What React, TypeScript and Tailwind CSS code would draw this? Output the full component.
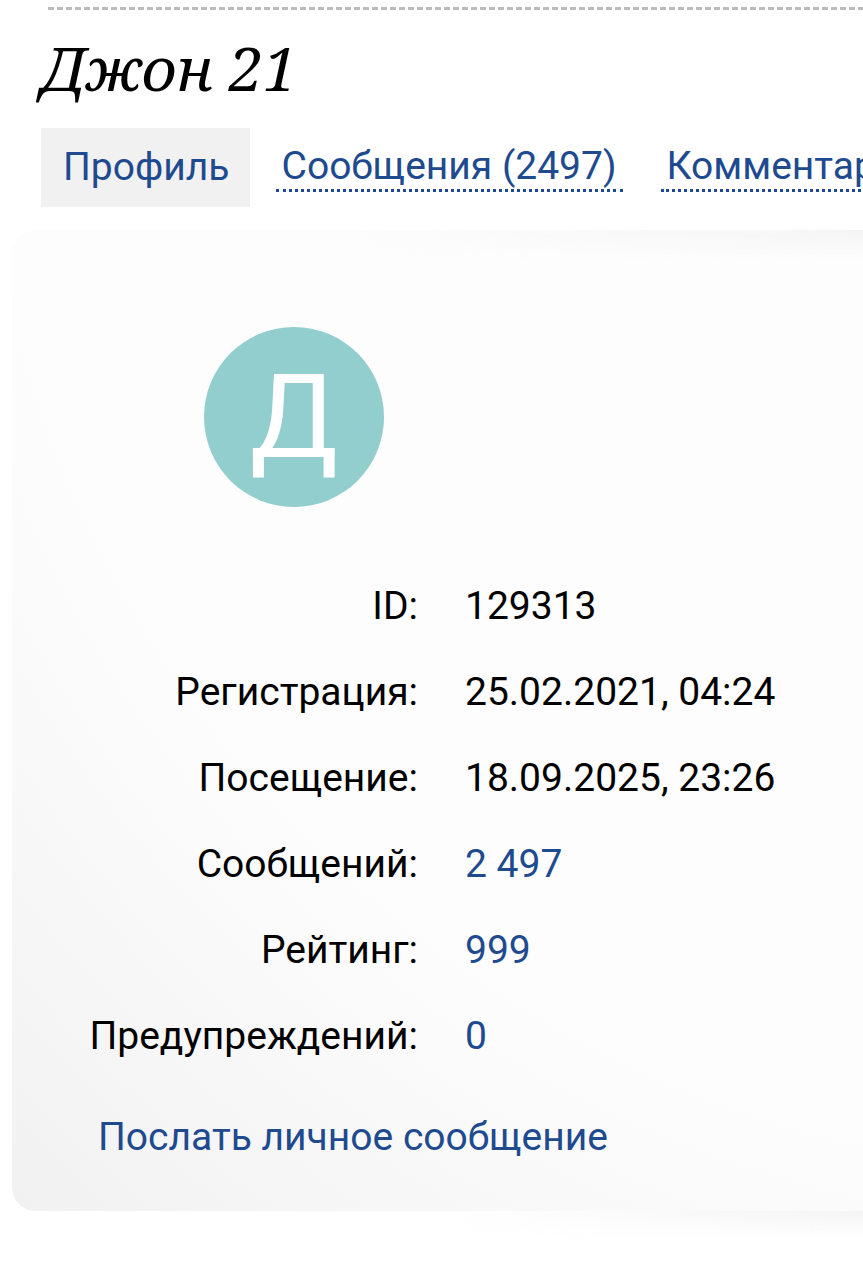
const rows = [
  { label: "ID:", value: "129313" },
  { label: "Регистрация:", value: "25.02.2021, 04:24" },
  { label: "Посещение:", value: "18.09.2025, 23:26" },
  { label: "Сообщений:", value: "2 497", link: true },
  { label: "Рейтинг:", value: "999", link: true },
  { label: "Предупреждений:", value: "0", link: true },
];

export default function App() {
  return (
    <main className="overflow-hidden bg-white pb-14 pt-[7px] font-['Roboto',sans-serif] text-[39px] text-black">
      <div className="ml-12 h-[3px] bg-[repeating-linear-gradient(to_right,#bbbbbb_0_6px,transparent_6px_9px)]" />
      <h1 className="ml-[41px] mt-[22px] font-['Noto_Serif','Liberation_Serif',serif] text-[61px] leading-[72px] italic">
        Джон 21
      </h1>
      <nav className="ml-[41px] mt-6 flex items-start whitespace-nowrap text-[#204a8f]">
        <a href="#profile" className="bg-[#f1f1f2] py-4 pl-[22px] pr-5 leading-[47px]">
          Профиль
        </a>
        <a href="#messages" className="ml-[26px] mt-4 border-b-3 border-dotted border-[#204a8f] px-[6px] leading-[45px]">
          Сообщения (2497)
        </a>
        <a href="#comments" className="ml-[38px] mt-4 border-b-3 border-dotted border-[#204a8f] px-[6px] leading-[45px]">
          Комментарии
        </a>
      </nav>
      <section className="relative ml-3 mt-[23px] rounded-l-[24px] bg-[radial-gradient(circle_1615px_at_130%_-20%,#fdfdfd_70%,#f1f1f1)] pb-11 pt-[97px]">
        {/* soft shadows fading in towards the right edge */}
        <div className="absolute right-0 top-0 h-7 w-3/5 bg-linear-to-b from-[#f4f4f4] to-transparent mask-l-from-0%" />
        <div className="absolute right-0 top-full h-7 w-1/2 bg-linear-to-b from-[#f4f4f4] to-transparent mask-l-from-0%" />
        <div className="ml-48 flex size-[180px] items-center justify-center rounded-full bg-[#92cecd] text-[117px] leading-none text-white">
          Д
        </div>
        <dl className="mt-14">
          {rows.map((row) => (
            <div key={row.label} className="flex h-[86px] items-center gap-[47px] whitespace-nowrap">
              <dt className="w-[406px] text-right">{row.label}</dt>
              <dd>
                {row.link ? (
                  <a href="#details" className="text-[#204a8f]">
                    {row.value}
                  </a>
                ) : (
                  row.value
                )}
              </dd>
            </div>
          ))}
        </dl>
        <a href="#send" className="ml-[86px] mt-7 inline-block leading-[60px] text-[#204a8f]">
          Послать личное сообщение
        </a>
      </section>
    </main>
  );
}
